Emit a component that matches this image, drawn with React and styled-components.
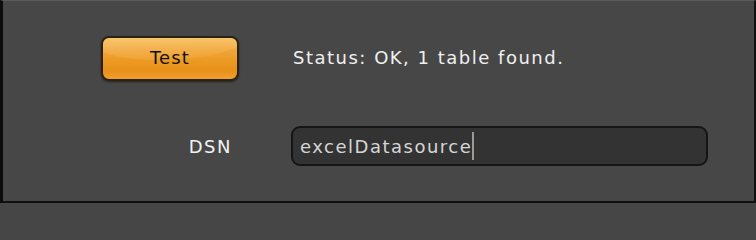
import React from "react";
import styled, { createGlobalStyle } from "styled-components";

const GlobalStyle = createGlobalStyle`
  html, body {
    margin: 0;
    padding: 0;
    background: #464646;
  }
`;

const Frame = styled.div`
  box-sizing: border-box;
  width: 756px;
  height: 203px;
  background: #474747;
  border-top: 1px solid #5a5a5a;
  border-left: 3px solid #0d0d0d;
  border-right: 2px solid #111;
  border-bottom: 2px solid #111;
  padding: 35px 0 0 98px;
  display: grid;
  grid-template-columns: 138px 417px;
  grid-template-rows: 45px 40px;
  column-gap: 52px;
  row-gap: 45px;
  align-items: center;
  font-family: "DejaVu Sans", Tahoma, sans-serif;
  font-size: 18px;
  letter-spacing: 1.5px;
`;

const Button = styled.button`
  position: relative;
  overflow: hidden;
  box-sizing: border-box;
  width: 138px;
  height: 45px;
  border: 2px solid #2a2112;
  border-radius: 8px;
  background: linear-gradient(
    to bottom,
    #f6bd5c 0%,
    #f0a53a 30%,
    #ec9a22 55%,
    #e8901a 80%,
    #f0a030 100%
  );
  box-shadow: 0 1px 2px rgba(0, 0, 0, 0.5);
  color: #111;
  font-family: inherit;
  font-size: 18px;
  letter-spacing: 1.2px;
  padding: 0 0 2px;
  cursor: pointer;

  &::before {
    content: "";
    position: absolute;
    left: -10%;
    top: -60%;
    width: 120%;
    height: 115%;
    border-radius: 0 0 50% 60%;
    background: linear-gradient(
      to bottom,
      rgba(255, 220, 150, 0.45),
      rgba(255, 200, 120, 0.15)
    );
    transform: rotate(-4deg);
  }

  span {
    position: relative;
  }
`;

const Status = styled.div`
  color: #f0f0f0;
  padding-left: 2px;
  margin-top: -2px;
`;

const Label = styled.label`
  color: #f2f2f2;
  text-align: right;
  padding-right: 7px;
`;

const Input = styled.div`
  box-sizing: border-box;
  height: 40px;
  display: flex;
  align-items: center;
  background: #333333;
  border: 2px solid #151515;
  border-radius: 9px;
  padding-left: 7px;
  color: #d6d6d6;
`;

const Caret = styled.span`
  display: inline-block;
  width: 2px;
  height: 28px;
  margin-left: 0;
  background: #9a9a9a;
`;

export default function App() {
  return (
    <>
      <GlobalStyle />
      <Frame>
        <Button>
          <span>Test</span>
        </Button>
        <Status>Status: OK, 1 table found.</Status>
        <Label>DSN</Label>
        <Input>
          excelDatasource
          <Caret />
        </Input>
      </Frame>
    </>
  );
}
